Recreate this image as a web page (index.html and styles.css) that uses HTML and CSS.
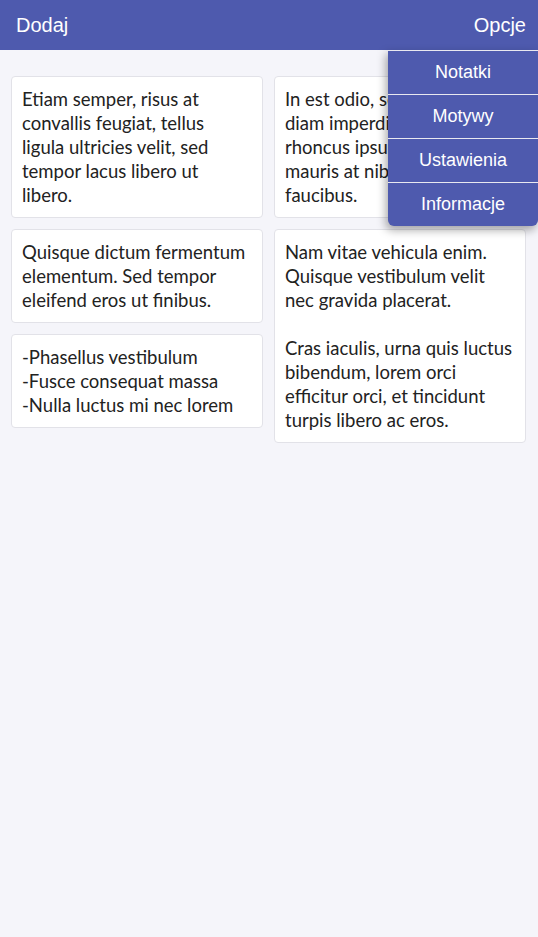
FILE: index.html
```html
<!DOCTYPE html>
<html lang="pl">
<head>
<meta charset="utf-8">
<link rel="stylesheet" href="styles.css">
<title>Notatki</title>
</head>
<body>
<header class="topbar">
  <span class="topbar-btn">Dodaj</span>
  <span class="topbar-btn">Opcje</span>
</header>
<nav class="menu">
  <div class="menu-item">Notatki</div>
  <div class="menu-item">Motywy</div>
  <div class="menu-item">Ustawienia</div>
  <div class="menu-item">Informacje</div>
</nav>
<main class="notes">
  <div class="col">
    <div class="note">Etiam semper, risus at<br>convallis feugiat, tellus<br>ligula ultricies velit, sed<br>tempor lacus libero ut<br>libero.</div>
    <div class="note">Quisque dictum fermentum<br>elementum. Sed tempor<br>eleifend eros ut finibus.</div>
    <div class="note">-Phasellus vestibulum<br>-Fusce consequat massa<br>-Nulla luctus mi nec lorem</div>
  </div>
  <div class="col">
    <div class="note">In est odio, sed vitae<br>diam imperdiet eget,<br>rhoncus ipsum sit amet<br>mauris at nibh luctus<br>faucibus.</div>
    <div class="note">Nam vitae vehicula enim.<br>Quisque vestibulum velit<br>nec gravida placerat.<br><br>Cras iaculis, urna quis luctus<br>bibendum, lorem orci<br>efficitur orci, et tincidunt<br>turpis libero ac eros.</div>
  </div>
</main>
</body>
</html>
```
FILE: styles.css
```css
html, body {
  margin: 0;
  padding: 0;
}
body {
  background: #f5f5fa;
  min-height: 937px;
  font-family: "Liberation Sans", Arial, sans-serif;
}
.topbar {
  height: 50px;
  background: #4e5aae;
  display: flex;
  justify-content: space-between;
  align-items: center;
  padding: 0 12px 0 16px;
  color: #fff;
  font-size: 20px;
}
.menu {
  position: absolute;
  top: 50px;
  right: 0;
  width: 150px;
  background: #4e5aae;
  border-bottom-left-radius: 6px;
  border-bottom-right-radius: 6px;
  box-shadow: -2px 4px 10px rgba(0,0,0,0.35);
  z-index: 2;
}
.menu-item {
  height: 43px;
  border-top: 1px solid #e8e8f0;
  display: flex;
  align-items: center;
  justify-content: center;
  color: #fff;
  font-size: 18px;
}
.notes {
  display: flex;
  gap: 11px;
  padding: 26px 12px 0 11px;
  align-items: flex-start;
}
.col {
  flex: 1;
  display: flex;
  flex-direction: column;
  gap: 11px;
  min-width: 0;
}
.note {
  background: #fff;
  border: 1px solid #e2e2e8;
  border-radius: 4px;
  padding: 10px 8px 10px 10px;
  font-family: "Lato", sans-serif;
  font-size: 18.5px;
  line-height: 24px;
  color: #222;
}
```
